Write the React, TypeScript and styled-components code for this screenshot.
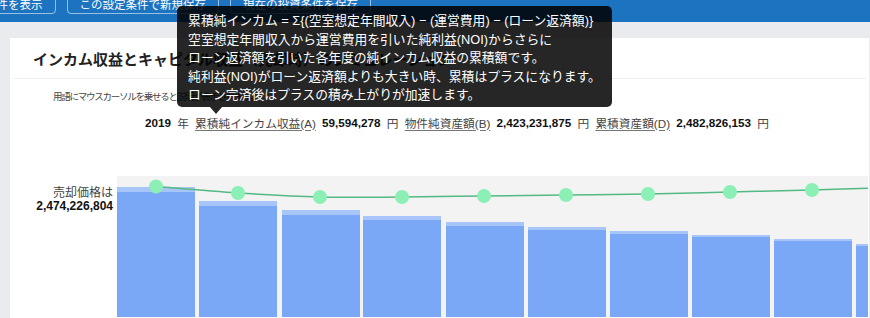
import React from "react";
import styled, { createGlobalStyle } from "styled-components";

const GlobalStyle = createGlobalStyle`
  html, body {
    margin: 0;
    padding: 0;
    overflow: hidden;
    background: #e9ebee;
    font-family: "Liberation Sans", "Noto Sans CJK JP", sans-serif;
    color: #333;
  }
  * { box-sizing: border-box; }
`;

const Page = styled.div`
  width: 870px;
  height: 318px;
  overflow: hidden;
  display: flex;
  flex-direction: column;
`;

const TopBar = styled.div`
  height: 22px;
  flex: none;
  background: #1c74c1;
  display: flex;
  align-items: flex-end;
  gap: 11px;
  padding-bottom: 8px;
  overflow: hidden;
`;

const BarButton = styled.div<{ $shift?: number }>`
  height: 24px;
  flex: none;
  display: flex;
  align-items: center;
  padding: 4px 12px 0;
  margin-left: ${(p) => (p.$shift ? `${p.$shift}px` : "0")};
  border: 1px solid rgba(255, 255, 255, 0.55);
  border-radius: 4px;
  color: #fff;
  font-size: 11.5px;
  white-space: nowrap;
`;

const Card = styled.div`
  flex: 1;
  margin: 16px 1px 0 10px;
  background: #fff;
  display: flex;
  flex-direction: column;
`;

const CardHeader = styled.div`
  height: 41px;
  margin: 0 3px;
  padding-left: 20px;
  display: flex;
  align-items: center;
  border-bottom: 1px solid #f0f0f0;
`;

const Title = styled.h2`
  margin: 0;
  font-size: 15px;
  font-weight: bold;
  color: #222;
  white-space: nowrap;
`;

const Hint = styled.div`
  margin-top: 11px;
  padding-left: 43px;
  font-size: 9.5px;
  line-height: 14px;
  letter-spacing: -1.25px;
  color: #444;
  white-space: nowrap;
`;

const Stats = styled.div`
  margin-top: 10px;
  padding-left: 135px;
  display: flex;
  align-items: center;
  gap: 6.2px;
  height: 16px;
  font-size: 11.7px;
  white-space: nowrap;
`;

const Num = styled.span`
  font-weight: bold;
  color: #111;
`;

const Unit = styled.span`
  color: #444;
`;

const Term = styled.span`
  position: relative;
  color: #444;
  text-decoration: underline;
  text-underline-offset: 2px;
  text-decoration-color: #777;
`;

const Tooltip = styled.div`
  position: absolute;
  left: -18px;
  bottom: calc(100% + 7px);
  width: 435px;
  padding: 6px 11px 2px;
  background: rgba(0, 0, 0, 0.85);
  border-radius: 5px;
  color: #fff;
  font-size: 12.8px;
  line-height: 18.5px;
  text-decoration: none;
  z-index: 10;
  &::after {
    content: "";
    position: absolute;
    top: 100%;
    left: 33px;
    border-left: 6px solid transparent;
    border-right: 6px solid transparent;
    border-top: 7px solid rgba(0, 0, 0, 0.85);
  }
`;

const TipLine = styled.div`
  white-space: nowrap;
`;

const ChartRow = styled.div`
  margin-top: 46px;
  flex: 1;
  display: flex;
`;

const PriceLabel = styled.div`
  width: 107px;
  flex: none;
  padding: 11px 4px 0 0;
  text-align: right;
  font-size: 12px;
  line-height: 12.5px;
  color: #444;
`;

const PriceValue = styled.div`
  font-weight: bold;
  color: #111;
`;

const Plot = styled.svg`
  display: block;
  flex: none;
`;

const bars = [
  { x: 0, light: 11, dark: 16 },
  { x: 82, light: 25, dark: 30 },
  { x: 165, light: 34, dark: 39 },
  { x: 246, light: 40, dark: 44 },
  { x: 329, light: 46, dark: 50 },
  { x: 411, light: 51, dark: 54 },
  { x: 493, light: 55, dark: 58 },
  { x: 575, light: 59, dark: 61 },
  { x: 657, light: 63, dark: 65 },
  { x: 739, light: 68, dark: 70 },
];

const dots: [number, number][] = [
  [39, 10.5],
  [121, 17],
  [203, 21],
  [285, 21],
  [367, 20],
  [449, 19],
  [531, 18],
  [613, 16],
  [695, 14],
  [777, 11.5],
];

function smoothPath(pts: [number, number][]) {
  let d = `M${pts[0][0]},${pts[0][1]}`;
  for (let i = 0; i < pts.length - 1; i++) {
    const p0 = pts[i - 1] || pts[i];
    const p1 = pts[i];
    const p2 = pts[i + 1];
    const p3 = pts[i + 2] || p2;
    const c1x = p1[0] + (p2[0] - p0[0]) / 6;
    const c1y = p1[1] + (p2[1] - p0[1]) / 6;
    const c2x = p2[0] - (p3[0] - p1[0]) / 6;
    const c2y = p2[1] - (p3[1] - p1[1]) / 6;
    d += ` C${c1x},${c1y} ${c2x},${c2y} ${p2[0]},${p2[1]}`;
  }
  return d;
}

const PW = 751;
const PH = 141;

export default function App() {
  return (
    <>
      <GlobalStyle />
      <Page>
        <TopBar>
          <BarButton $shift={-28}>条件を表示</BarButton>
          <BarButton>この設定条件で新規保存</BarButton>
          <BarButton>現在の投資条件を保存</BarButton>
        </TopBar>
        <Card>
          <CardHeader>
            <Title>インカム収益とキャピタル収益（売却時）のシミュレーション</Title>
          </CardHeader>
          <Hint>用語にマウスカーソルを乗せると説明が表示されます。</Hint>
          <Stats>
            <Num>2019</Num>
            <Unit>年</Unit>
            <Term>
              累積純インカム収益(A)
              <Tooltip>
                <TipLine>累積純インカム = Σ{"{"}(空室想定年間収入) − (運営費用) − (ローン返済額){"}"}</TipLine>
                <TipLine>空室想定年間収入から運営費用を引いた純利益(NOI)からさらに</TipLine>
                <TipLine>ローン返済額を引いた各年度の純インカム収益の累積額です。</TipLine>
                <TipLine>純利益(NOI)がローン返済額よりも大きい時、累積はプラスになります。</TipLine>
                <TipLine>ローン完済後はプラスの積み上がりが加速します。</TipLine>
              </Tooltip>
            </Term>
            <Num>59,594,278</Num>
            <Unit>円</Unit>
            <Term>物件純資産額(B)</Term>
            <Num>2,423,231,875</Num>
            <Unit>円</Unit>
            <Term>累積資産額(D)</Term>
            <Num>2,482,826,153</Num>
            <Unit>円</Unit>
          </Stats>
          <ChartRow>
            <PriceLabel>
              売却価格は
              <PriceValue>2,474,226,804</PriceValue>
            </PriceLabel>
            <Plot width={PW} height={PH} viewBox={`0 0 ${PW} ${PH}`}>
              <rect x={0} y={0} width={PW} height={PH} fill="#f3f3f3" />
              {bars.map((b, i) => (
                <g key={i}>
                  <rect x={b.x} y={b.light} width={78} height={PH - b.light} fill="#a8c5fa" />
                  <rect x={b.x} y={b.dark} width={78} height={PH - b.dark} fill="#7aa7f6" />
                </g>
              ))}
              <path d={smoothPath(dots)} fill="none" stroke="#55b985" strokeWidth={1.5} />
              {dots.map(([x, y], i) => (
                <circle key={i} cx={x} cy={y} r={7} fill="#8cf0b6" />
              ))}
            </Plot>
          </ChartRow>
        </Card>
      </Page>
    </>
  );
}
